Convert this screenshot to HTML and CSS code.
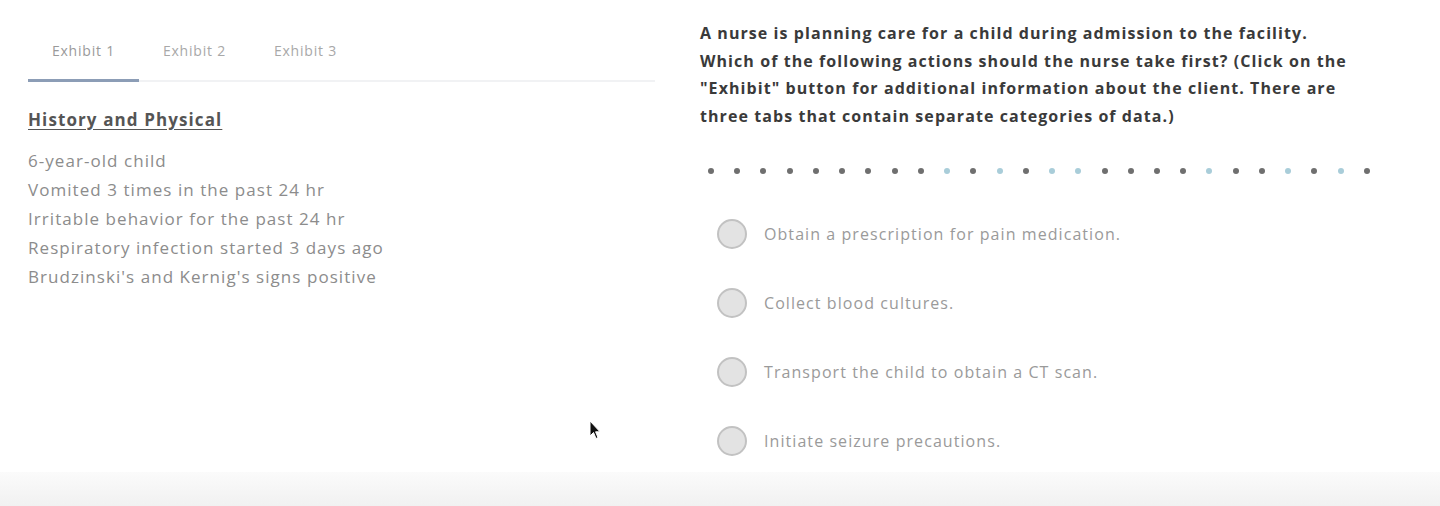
FILE: index.html
```html
<!DOCTYPE html>
<html lang="en">
<head>
  <meta charset="UTF-8">
  <meta name="viewport" content="width=device-width, initial-scale=1.0">
  <title>Exhibit question</title>
  <link rel="stylesheet" href="styles.css">
</head>
<body>

<div class="page">
  <div class="exhibit">
    <div class="tabs">
      <div class="tab active">Exhibit 1</div>
      <div class="tab">Exhibit 2</div>
      <div class="tab">Exhibit 3</div>
    </div>
    <h3 class="exhibit-title">History and Physical</h3>
    <ul class="facts">
      <li>6-year-old child</li>
      <li>Vomited 3 times in the past 24 hr</li>
      <li>Irritable behavior for the past 24 hr</li>
      <li>Respiratory infection started 3 days ago</li>
      <li>Brudzinski's and Kernig's signs positive</li>
    </ul>
  </div>

  <div class="question">
    <p class="stem">A nurse is planning care for a child during admission to the facility. Which of the following actions should the nurse take first? (Click on the "Exhibit" button for additional information about the client. There are three tabs that contain separate categories of data.)</p>

    <div class="dots">
      <span class="dot"></span><span class="dot"></span><span class="dot"></span><span class="dot"></span><span class="dot"></span>
      <span class="dot"></span><span class="dot"></span><span class="dot"></span><span class="dot"></span><span class="dot light"></span>
      <span class="dot"></span><span class="dot light"></span><span class="dot"></span><span class="dot light"></span><span class="dot light"></span>
      <span class="dot"></span><span class="dot"></span><span class="dot"></span><span class="dot"></span><span class="dot light"></span>
      <span class="dot"></span><span class="dot"></span><span class="dot light"></span><span class="dot"></span><span class="dot light"></span>
      <span class="dot"></span>
    </div>

    <div class="options">
      <label class="option"><span class="radio"></span>Obtain a prescription for pain medication.</label>
      <label class="option"><span class="radio"></span>Collect blood cultures.</label>
      <label class="option"><span class="radio"></span>Transport the child to obtain a CT scan.</label>
      <label class="option"><span class="radio"></span>Initiate seizure precautions.</label>
    </div>
  </div>
</div>

<div class="footer"></div>

<!-- puntero del raton en la captura -->
<svg class="cursor" width="12" height="20" viewBox="0 0 12 20">
  <path d="M1 1 L1 16 L4.5 12.5 L7 18.5 L9 17.6 L6.6 11.8 L11 11.8 Z" fill="#111" stroke="#fff" stroke-width="1"/>
</svg>

</body>
</html>
```

FILE: styles.css
```css
html, body { margin: 0; padding: 0; background: #fff; }
body { font-family: "Open Sans", "Liberation Sans", Arial, sans-serif; color: #888; height: 506px; overflow: hidden; position: relative; }

.page { display: flex; height: 472px; }

.exhibit { width: 627px; margin-left: 28px; padding-top: 41px; }
.tabs { display: flex; border-bottom: 2px solid #f1f2f4; }
.tab { width: 111px; text-align: center; font-size: 14px; letter-spacing: 0.8px; color: #a8a8a8; padding-bottom: 19px; margin-bottom: -2px; border-bottom: 3px solid transparent; }
.tab.active { color: #9a9a9a; border-bottom-color: #8c9db6; }

.exhibit-title { margin: 26px 0 15px; font-size: 17px; font-weight: 700; letter-spacing: 1.1px; color: #555; text-decoration: underline; text-underline-offset: 3px; }
.facts { list-style: none; margin: 0; padding: 0; font-size: 17px; letter-spacing: 1.05px; line-height: 29px; color: #8c8c8c; }

.question { margin-left: 45px; width: 690px; padding-top: 20px; }
.stem { margin: 0; font-size: 16px; font-weight: 700; letter-spacing: 1.07px; line-height: 27.7px; color: #3a3a3a; width: 660px; }

.dots { display: flex; justify-content: space-between; width: 662px; margin: 37px 0 0 8px; }
.dot { width: 6px; height: 6px; border-radius: 50%; background: #6f6f6f; }
.dot.light { background: #a9cdd9; }

.options { margin-top: 45px; margin-left: 17px; }
.option { display: flex; align-items: center; height: 30px; margin-bottom: 39px; font-size: 16px; letter-spacing: 1.07px; color: #9a9a9a; }
.radio { width: 26px; height: 26px; border-radius: 50%; border: 2px solid #c2c2c2; background: #e3e3e3; margin-right: 17px; flex-shrink: 0; }

.footer { height: 34px; background: linear-gradient(#fbfbfb, #f1f1f1); }

.cursor { position: absolute; left: 589px; top: 420px; }
```
